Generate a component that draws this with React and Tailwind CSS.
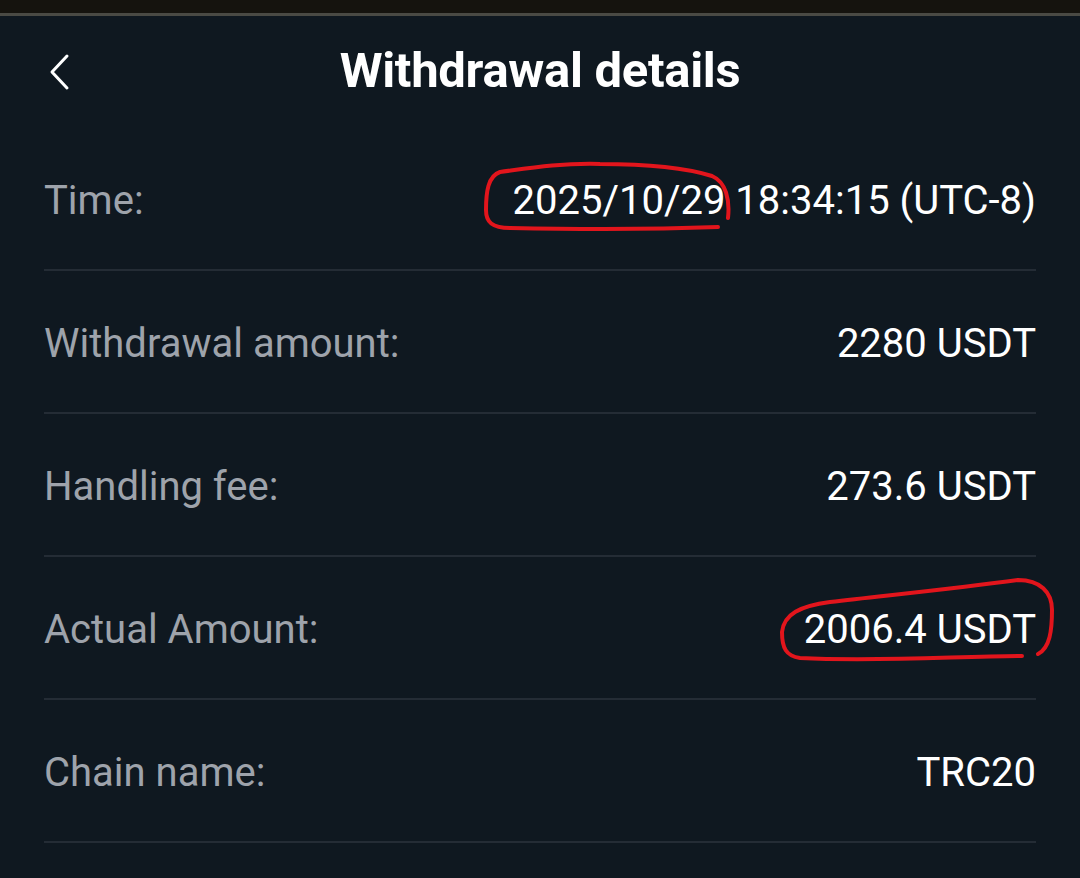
import React from 'react';

const rows = [
  { label: 'Time:', value: '2025/10/29 18:34:15 (UTC-8)' },
  { label: 'Withdrawal amount:', value: '2280 USDT' },
  { label: 'Handling fee:', value: '273.6 USDT' },
  { label: 'Actual Amount:', value: '2006.4 USDT' },
  { label: 'Chain name:', value: 'TRC20' },
];

export default function App() {
  return (
    <div className="relative w-[1080px] h-[878px] overflow-hidden bg-[#0f1820] font-['Roboto','Liberation_Sans',sans-serif]">
      {/* status strip */}
      <div className="h-[13px] bg-[#15130e]"></div>
      <div className="h-[3px] bg-[#4a4a44]"></div>

      {/* header */}
      <div className="relative h-[112px] flex items-center justify-center">
        <button className="absolute left-[44px] top-[36px] w-[30px] h-[40px] flex items-center justify-center">
          <svg width="26" height="38" viewBox="0 0 26 38" fill="none">
            <path d="M21 3 L6 19 L21 35" stroke="#ffffff" strokeWidth="3" strokeLinecap="round" strokeLinejoin="round" />
          </svg>
        </button>
        <h1 className="text-white font-bold text-[49px] leading-none tracking-[-0.3px] -mt-[4px]">Withdrawal details</h1>
      </div>

      {/* rows */}
      <div className="px-[44px]">
        {rows.map((r) => (
          <div key={r.label} className="h-[143px] pt-[4px] flex items-center justify-between border-b-[2px] border-[#242c35]">
            <span className="text-[40px] text-[#9ea3ab] leading-none">{r.label}</span>
            <span className="text-[40px] text-white leading-none">{r.value}</span>
          </div>
        ))}
      </div>

      {/* hand-drawn annotations */}
      <svg className="absolute inset-0 pointer-events-none" width="1080" height="878" viewBox="0 0 1080 878" fill="none">
        <path
          d="M728 218 C730 200 726 182 712 176 C680 166 640 164 600 164 C560 163 530 168 500 172 C488 176 486 192 486 210 C486 222 492 228 510 228 C560 229 640 230 718 227"
          stroke="#e2151c" strokeWidth="4" strokeLinecap="round" strokeLinejoin="round"
        />
        <path
          d="M1022 656 C960 656 880 662 800 658 C786 656 782 648 782 632 C784 614 800 606 830 602 C900 594 960 588 1018 580 C1040 580 1052 592 1052 610 C1052 630 1050 648 1038 654"
          stroke="#e2151c" strokeWidth="4" strokeLinecap="round" strokeLinejoin="round"
        />
      </svg>
    </div>
  );
}
